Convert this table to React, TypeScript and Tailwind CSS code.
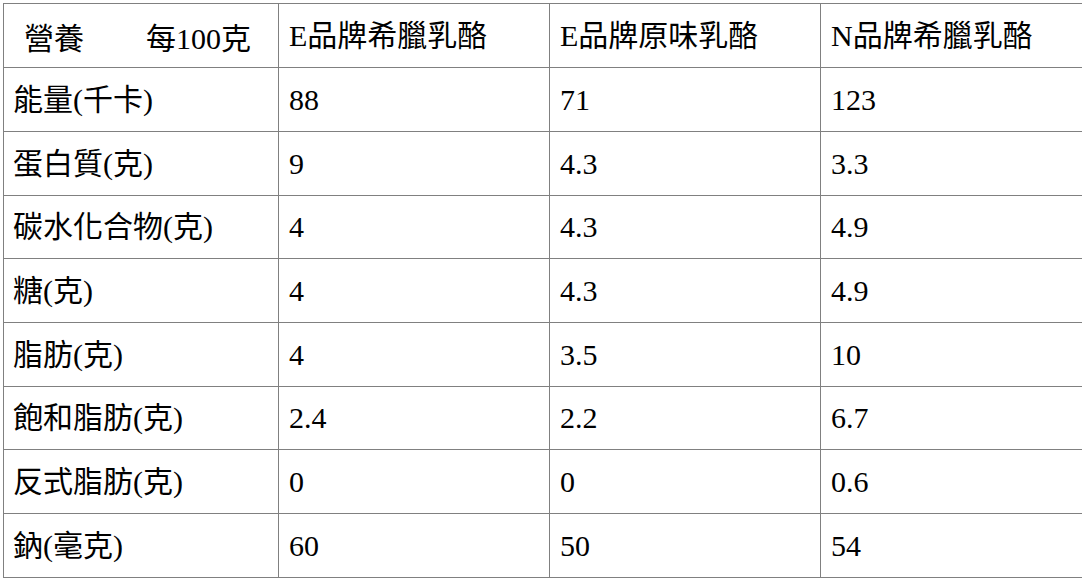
const rows: { name: string; a: string; b: string; c: string; h: string }[] = [
  { name: "能量(千卡)", a: "88", b: "71", c: "123", h: "h-[64px]" },
  { name: "蛋白質(克)", a: "9", b: "4.3", c: "3.3", h: "h-[64px]" },
  { name: "碳水化合物(克)", a: "4", b: "4.3", c: "4.9", h: "h-[63px]" },
  { name: "糖(克)", a: "4", b: "4.3", c: "4.9", h: "h-[64px]" },
  { name: "脂肪(克)", a: "4", b: "3.5", c: "10", h: "h-[64px]" },
  { name: "飽和脂肪(克)", a: "2.4", b: "2.2", c: "6.7", h: "h-[63px]" },
  { name: "反式脂肪(克)", a: "0", b: "0", c: "0.6", h: "h-[64px]" },
  { name: "鈉(毫克)", a: "60", b: "50", c: "54", h: "h-[64px]" },
];

const cell = "border border-[#808080] px-[10px] align-middle";

export default function App() {
  return (
    <div className="min-h-screen bg-white pl-[3px] pt-[3px] font-['Liberation_Serif','Noto_Sans_CJK_TC',serif] text-[30px] leading-none text-black">
      <table className="w-[1079px] table-fixed border-collapse">
        <colgroup>
          <col className="w-[275px]" />
          <col className="w-[271px]" />
          <col className="w-[271px]" />
          <col className="w-[262px]" />
        </colgroup>
        <tbody>
          <tr className="h-[64px]">
            <td className={`${cell} !px-0`}>
              <div className="flex pl-[20px] pr-[27px] pt-[6px]">
                <span>營養</span>
                <span className="ml-auto">每100克</span>
              </div>
            </td>
            <td className={cell}>E品牌希臘乳酪</td>
            <td className={cell}>E品牌原味乳酪</td>
            <td className={cell}>N品牌希臘乳酪</td>
          </tr>
          {rows.map((r) => (
            <tr key={r.name} className={r.h}>
              <td className={`${cell} !pl-[9px]`}>{r.name}</td>
              <td className={cell}>{r.a}</td>
              <td className={cell}>{r.b}</td>
              <td className={cell}>{r.c}</td>
            </tr>
          ))}
        </tbody>
      </table>
    </div>
  );
}
